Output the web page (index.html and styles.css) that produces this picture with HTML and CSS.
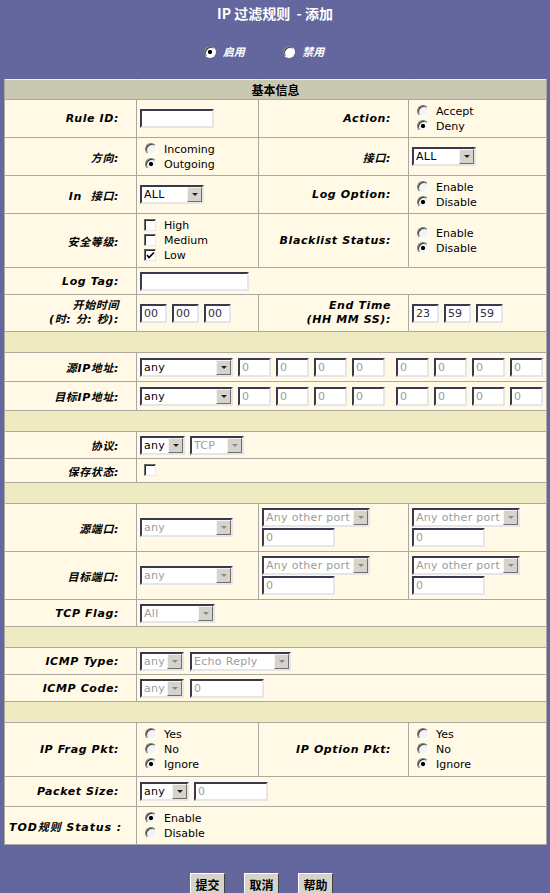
FILE: index.html
```html
<!DOCTYPE html>
<html lang="zh-CN">

<head>
    <meta charset="UTF-8">
    <title>IP 过滤规则 - 添加</title>
    <link rel="stylesheet" href="styles.css">
</head>

<body>
    <div class="page">
        <h1 class="title">IP 过滤规则 &nbsp;- 添加</h1>

        <div class="switch">
            <label><input class="rd rd-white" type="radio" name="state" checked>启用</label>
            <label><input class="rd rd-white" type="radio" name="state">禁用</label>
        </div>

        <table class="rule">
            <colgroup>
                <col class="c1">
                <col class="c2">
                <col class="c3">
                <col class="c4">
            </colgroup>

            <tr class="r-head">
                <th colspan="4">基本信息</th>
            </tr>

            <tr class="r-pair">
                <td class="lbl">Rule ID:</td>
                <td><input class="txt w74" type="text"></td>
                <td class="lbl">Action:</td>
                <td>
                    <label class="opt"><input class="rd" type="radio" name="action">Accept</label>
                    <label class="opt"><input class="rd" type="radio" name="action" checked>Deny</label>
                </td>
            </tr>

            <tr class="r-pair">
                <td class="lbl">方向:</td>
                <td>
                    <label class="opt"><input class="rd" type="radio" name="dir">Incoming</label>
                    <label class="opt"><input class="rd" type="radio" name="dir" checked>Outgoing</label>
                </td>
                <td class="lbl">接口:</td>
                <td><span class="sel w64"><span class="val">ALL</span><span class="arr"></span></span></td>
            </tr>

            <tr class="r-pair">
                <td class="lbl">In &nbsp;接口:</td>
                <td><span class="sel w64"><span class="val">ALL</span><span class="arr"></span></span></td>
                <td class="lbl">Log Option:</td>
                <td>
                    <label class="opt"><input class="rd" type="radio" name="log">Enable</label>
                    <label class="opt"><input class="rd" type="radio" name="log" checked>Disable</label>
                </td>
            </tr>

            <tr class="r-three">
                <td class="lbl">安全等级:</td>
                <td>
                    <label class="opt"><span class="cb"></span>High</label>
                    <label class="opt"><span class="cb"></span>Medium</label>
                    <label class="opt"><span class="cb"><svg viewBox="0 0 9 9" width="9" height="9"><path d="M1 4l2 2.5L8 1.5" fill="none" stroke="#000" stroke-width="1.6"/></svg></span>Low</label>
                </td>
                <td class="lbl">Blacklist Status:</td>
                <td>
                    <label class="opt"><input class="rd" type="radio" name="black">Enable</label>
                    <label class="opt"><input class="rd" type="radio" name="black" checked>Disable</label>
                </td>
            </tr>

            <tr class="r-one">
                <td class="lbl">Log Tag:</td>
                <td colspan="3"><input class="txt w109" type="text"></td>
            </tr>

            <tr class="r-time">
                <td class="lbl lbl-two">开始时间<br>(时: 分: 秒):</td>
                <td>
                    <div class="line gap5">
                        <input class="txt tm" type="text" value="00">
                        <input class="txt tm" type="text" value="00">
                        <input class="txt tm" type="text" value="00">
                    </div>
                </td>
                <td class="lbl lbl-two">End Time<br>(HH MM SS):</td>
                <td>
                    <div class="line gap5">
                        <input class="txt tm" type="text" value="23">
                        <input class="txt tm" type="text" value="59">
                        <input class="txt tm" type="text" value="59">
                    </div>
                </td>
            </tr>

            <tr class="r-gap"><td colspan="4"></td></tr>

            <tr class="r-ip">
                <td class="lbl">源IP地址:</td>
                <td colspan="3">
                    <div class="line gap5">
                        <span class="sel w93"><span class="val">any</span><span class="arr"></span></span>
                        <input class="txt ip off" type="text" value="0">
                        <input class="txt ip off" type="text" value="0">
                        <input class="txt ip off" type="text" value="0">
                        <input class="txt ip off" type="text" value="0">
                        <input class="txt ip ip-mask off" type="text" value="0">
                        <input class="txt ip off" type="text" value="0">
                        <input class="txt ip off" type="text" value="0">
                        <input class="txt ip off" type="text" value="0">
                    </div>
                </td>
            </tr>

            <tr class="r-ip">
                <td class="lbl">目标IP地址:</td>
                <td colspan="3">
                    <div class="line gap5">
                        <span class="sel w93"><span class="val">any</span><span class="arr"></span></span>
                        <input class="txt ip off" type="text" value="0">
                        <input class="txt ip off" type="text" value="0">
                        <input class="txt ip off" type="text" value="0">
                        <input class="txt ip off" type="text" value="0">
                        <input class="txt ip ip-mask off" type="text" value="0">
                        <input class="txt ip off" type="text" value="0">
                        <input class="txt ip off" type="text" value="0">
                        <input class="txt ip off" type="text" value="0">
                    </div>
                </td>
            </tr>

            <tr class="r-gap"><td colspan="4"></td></tr>

            <tr class="r-one">
                <td class="lbl">协议:</td>
                <td colspan="3">
                    <div class="line gap5">
                        <span class="sel w45"><span class="val">any</span><span class="arr"></span></span>
                        <span class="sel w54 off"><span class="val">TCP</span><span class="arr"></span></span>
                    </div>
                </td>
            </tr>

            <tr class="r-keep">
                <td class="lbl">保存状态:</td>
                <td colspan="3"><span class="cb"></span></td>
            </tr>

            <tr class="r-gap"><td colspan="4"></td></tr>

            <tr class="r-port">
                <td class="lbl">源端口:</td>
                <td><span class="sel w93 off"><span class="val">any</span><span class="arr"></span></span></td>
                <td class="stack">
                    <span class="sel w108 off"><span class="val">Any other port</span><span class="arr"></span></span>
                    <input class="txt w73 off" type="text" value="0">
                </td>
                <td class="stack">
                    <span class="sel w108 off"><span class="val">Any other port</span><span class="arr"></span></span>
                    <input class="txt w73 off" type="text" value="0">
                </td>
            </tr>

            <tr class="r-port">
                <td class="lbl">目标端口:</td>
                <td><span class="sel w93 off"><span class="val">any</span><span class="arr"></span></span></td>
                <td class="stack">
                    <span class="sel w108 off"><span class="val">Any other port</span><span class="arr"></span></span>
                    <input class="txt w73 off" type="text" value="0">
                </td>
                <td class="stack">
                    <span class="sel w108 off"><span class="val">Any other port</span><span class="arr"></span></span>
                    <input class="txt w73 off" type="text" value="0">
                </td>
            </tr>

            <tr class="r-one">
                <td class="lbl">TCP Flag:</td>
                <td colspan="3"><span class="sel w75 off"><span class="val">All</span><span class="arr"></span></span></td>
            </tr>

            <tr class="r-gap"><td colspan="4"></td></tr>

            <tr class="r-one">
                <td class="lbl">ICMP Type:</td>
                <td colspan="3">
                    <div class="line gap6">
                        <span class="sel w44 off"><span class="val">any</span><span class="arr"></span></span>
                        <span class="sel w101 off"><span class="val">Echo Reply</span><span class="arr"></span></span>
                    </div>
                </td>
            </tr>

            <tr class="r-one">
                <td class="lbl">ICMP Code:</td>
                <td colspan="3">
                    <div class="line gap6">
                        <span class="sel w44 off"><span class="val">any</span><span class="arr"></span></span>
                        <input class="txt w74 off" type="text" value="0">
                    </div>
                </td>
            </tr>

            <tr class="r-gap"><td colspan="4"></td></tr>

            <tr class="r-three">
                <td class="lbl">IP Frag Pkt:</td>
                <td>
                    <label class="opt"><input class="rd" type="radio" name="frag">Yes</label>
                    <label class="opt"><input class="rd" type="radio" name="frag">No</label>
                    <label class="opt"><input class="rd" type="radio" name="frag" checked>Ignore</label>
                </td>
                <td class="lbl">IP Option Pkt:</td>
                <td>
                    <label class="opt"><input class="rd" type="radio" name="ipopt">Yes</label>
                    <label class="opt"><input class="rd" type="radio" name="ipopt">No</label>
                    <label class="opt"><input class="rd" type="radio" name="ipopt" checked>Ignore</label>
                </td>
            </tr>

            <tr class="r-size">
                <td class="lbl">Packet Size:</td>
                <td colspan="3">
                    <div class="line gap5">
                        <span class="sel w49"><span class="val">any</span><span class="arr"></span></span>
                        <input class="txt w74 off" type="text" value="0">
                    </div>
                </td>
            </tr>

            <tr class="r-pair">
                <td class="lbl lbl-tod">TOD规则 Status :</td>
                <td colspan="3">
                    <label class="opt"><input class="rd" type="radio" name="tod" checked>Enable</label>
                    <label class="opt"><input class="rd" type="radio" name="tod">Disable</label>
                </td>
            </tr>
        </table>

        <div class="actions">
            <button class="btn" type="button">提交</button>
            <button class="btn" type="button">取消</button>
            <button class="btn" type="button">帮助</button>
        </div>
    </div>
</body>

</html>
```

FILE: styles.css
```css
/* Base */
* {
    box-sizing: border-box;
}

body {
    margin: 0;
    background-color: #64669e;
    font-family: "DejaVu Sans", "Noto Sans CJK SC", sans-serif;
    font-size: 11px;
    color: #000;
    overflow: hidden;
}

.page {
    padding: 0 4px;
}

/* Heading */
.title {
    margin: 0;
    padding-top: 5px;
    text-align: center;
    color: #fff;
    font-family: "Noto Sans CJK SC", sans-serif;
    font-size: 14px;
    font-weight: bold;
    line-height: 16px;
}

.switch {
    margin-top: 22px;
    height: 16px;
    padding-right: 22px;
    text-align: center;
    color: #fff;
    font-family: "Noto Sans CJK SC", sans-serif;
    font-style: italic;
    font-weight: bold;
    font-size: 11px;
    line-height: 16px;
}

.switch label {
    margin: 0 18px;
}

/* Rule table */
.rule {
    width: 542px;
    margin-top: 20px;
    border-collapse: collapse;
    background-color: #fff9e6;
    table-layout: fixed;
}

.c1 {
    width: 132px;
}

.c2 {
    width: 122px;
}

.c3 {
    width: 150px;
}

.c4 {
    width: 138px;
}

.rule th,
.rule td {
    border: 1px solid #a9a9a2;
    padding: 0 3px;
    vertical-align: middle;
    white-space: nowrap;
}

.rule th {
    height: 20px;
    background-color: #c9c9b3;
    border-top: 1px dotted #e8e8e8;
    font-family: "Noto Sans CJK SC", sans-serif;
    font-size: 12px;
    line-height: 14px;
}

.r-pair {
    height: 38px;
}

.r-three {
    height: 54px;
}

.r-one {
    height: 27px;
}

.r-time {
    height: 37px;
}

.r-ip {
    height: 29px;
}

.r-keep {
    height: 24px;
}

.r-port {
    height: 48px;
}

.r-size {
    height: 30px;
}

.r-gap {
    height: 21px;
}

.r-gap td {
    background-color: #efebc0;
}

.lbl {
    text-align: right;
    padding-right: 17px !important;
    font-weight: bold;
    font-style: italic;
    letter-spacing: 0.6px;
    font-size: 11px;
}

.lbl-two {
    line-height: 14px;
}

.lbl-tod {
    padding-right: 14px !important;
    letter-spacing: 0.9px;
}

/* Control rows */
.line {
    display: flex;
    align-items: center;
}

.gap5 {
    gap: 5px;
}

.gap6 {
    gap: 6px;
}

/* Radio / checkbox lines */
.opt {
    display: block;
    height: 15px;
    line-height: 15px;
}

.rd {
    appearance: none;
    -webkit-appearance: none;
    width: 12px;
    height: 12px;
    margin: 0 7px 0 5px;
    border-radius: 50%;
    border: 1px solid;
    border-color: #7a7a7a #fff #fff #7a7a7a;
    background-color: #f4f4f2;
    box-shadow: inset 1px 1px 0 #3c3c3c;
    vertical-align: -2px;
}

.rd:checked {
    background: radial-gradient(circle at 50% 50%, #000 0 1.8px, #f4f4f2 2.4px);
}

.rd-white {
    background-color: #fff;
    margin: 0 7px 0 0;
}

.rd-white:checked {
    background: radial-gradient(circle at 50% 50%, #000 0 1.8px, #fff 2.4px);
}

.cb {
    display: inline-block;
    width: 12px;
    height: 12px;
    margin: 0 8px 0 4px;
    border: 1px solid;
    border-color: #6a6a6a #e8e8e8 #e8e8e8 #6a6a6a;
    box-shadow: inset 1px 1px 0 #2a2a2a;
    background-color: #fff;
    vertical-align: -2px;
}

.cb svg {
    display: block;
    margin: 1px 0 0 1px;
}

/* Text fields */
.txt {
    height: 19px;
    margin: 0;
    padding: 0 2px;
    border: 2px solid;
    border-color: #3a3a4e #e6e6e6 #e6e6e6 #3a3a4e;
    background-color: #fff;
    font-family: "DejaVu Sans", sans-serif;
    font-size: 11px;
    color: #303040;
    vertical-align: middle;
    outline: none;
}

.txt.off {
    color: #9c9c9c;
}

.w74 {
    width: 74px;
}

.w73 {
    width: 73px;
}

.w109 {
    width: 109px;
}

.tm {
    width: 27px;
}

.ip {
    width: 33px;
}

.ip-mask {
    margin-left: 6px;
}

/* Drop-down boxes */
.sel {
    display: inline-flex;
    align-items: center;
    height: 19px;
    border: 2px solid;
    border-color: #3a3a4e #e6e6e6 #e6e6e6 #3a3a4e;
    background-color: #fff;
    vertical-align: middle;
}

.sel .val {
    flex: 1;
    padding-left: 2px;
    font-size: 11px;
    line-height: 15px;
    overflow: hidden;
    letter-spacing: 0.3px;
}

.sel .arr {
    width: 15px;
    height: 15px;
    background-color: #d6d3cb;
    border: 1px solid;
    border-color: #f4f4f4 #6e6e6e #6e6e6e #f4f4f4;
    display: flex;
    align-items: center;
    justify-content: center;
}

.sel .arr::before {
    content: "";
    border-left: 3px solid transparent;
    border-right: 3px solid transparent;
    border-top: 3px solid #222;
}

.sel.off .val {
    color: #9c9c9c;
}

.sel.off .arr::before {
    border-top-color: #8a8a8a;
}

.w64 {
    width: 64px;
}

.w93 {
    width: 93px;
}

.w45 {
    width: 45px;
}

.w44 {
    width: 44px;
}

.w49 {
    width: 49px;
}

.w54 {
    width: 54px;
}

.w75 {
    width: 75px;
}

.w101 {
    width: 101px;
}

.w108 {
    width: 108px;
}

.stack .sel,
.stack .txt {
    display: flex;
}

.stack .txt {
    margin-top: 1px;
}

/* Buttons */
.actions {
    margin-top: 28px;
    padding-right: 27px;
    display: flex;
    justify-content: center;
    gap: 19px;
}

.btn {
    width: 35px;
    height: 22px;
    padding: 0;
    background-color: #d6d3cb;
    border: 1px solid;
    border-color: #fff #404040 #404040 #fff;
    font-family: "Noto Sans CJK SC", sans-serif;
    font-size: 12px;
    font-weight: bold;
    color: #000;
}
```
